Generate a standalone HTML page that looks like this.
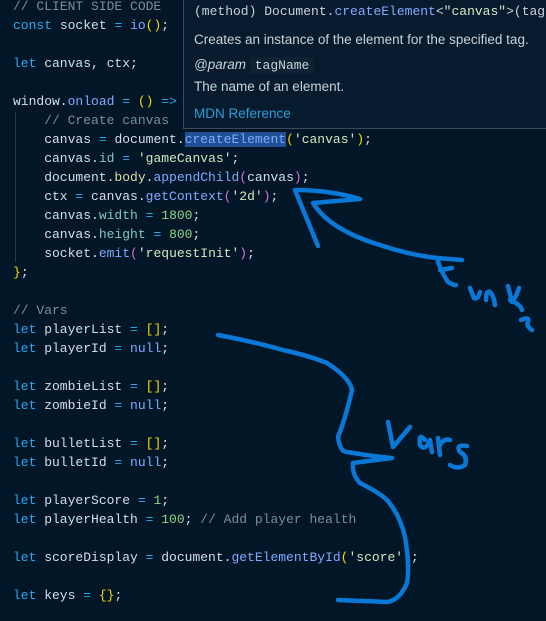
<!DOCTYPE html>
<html><head><style>
html,body{margin:0;padding:0;background:#011627;width:546px;height:621px;overflow:hidden;position:relative}
pre{margin:0;position:absolute;left:13px;top:-3px;font-family:"Liberation Mono",monospace;font-size:13px;line-height:19px;color:#d6deeb}
.k{color:#2aa7f0}.c{color:#818b96}.s{color:#d4e7c0}.n{color:#8fd48a}.p{color:#7fc8c0}.m{color:#82aaff}.y{color:#ffd700}.v{color:#da70d6}.b{color:#4aa3ff}.w{color:#e2d7a6}
.sel{background:#1f4f94}
.guide{position:absolute;left:15px;top:112px;width:1px;height:150px;background:#2a3a4a}
.tip{position:absolute;left:183px;top:-1px;width:362px;height:128px;background:#061b2e;border:1px solid #3b4a5a;border-right:none;font-family:"Liberation Sans",sans-serif;font-size:13.5px;color:#c9d1d9;overflow:hidden}
.tip .h{position:absolute;left:10px;top:4px;font-family:"Liberation Mono",monospace;font-size:13px;white-space:nowrap}
.tip .t{position:absolute;left:10px;white-space:nowrap}
code{font-family:"Liberation Mono",monospace;font-size:13px;background:#0f2233;padding:1px 5px}
</style></head><body>
<div class="guide"></div>
<pre><span class="c">// CLIENT SIDE CODE</span>
<span class="k">const</span> socket <span class="k">=</span> <span class="m">io</span><span class="y">()</span>;

<span class="k">let</span> canvas, ctx;

window.<span class="m">onload</span> <span class="k">=</span> <span class="y">()</span> <span class="k">=&gt;</span> <span class="y">{</span>
    <span class="c">// Create canvas</span>
    canvas <span class="k">=</span> document.<span class="m sel">createElement</span><span class="y">(</span><span class="s">'canvas'</span><span class="y">)</span>;
    canvas.<span class="p">id</span> <span class="k">=</span> <span class="s">'gameCanvas'</span>;
    document.<span class="w">body</span>.<span class="m">appendChild</span><span class="v">(</span>canvas<span class="v">)</span>;
    ctx <span class="k">=</span> canvas.<span class="m">getContext</span><span class="v">(</span><span class="s">'2d'</span><span class="v">)</span>;
    canvas.<span class="p">width</span> <span class="k">=</span> <span class="n">1800</span>;
    canvas.<span class="p">height</span> <span class="k">=</span> <span class="n">800</span>;
    socket.<span class="m">emit</span><span class="v">(</span><span class="s">'requestInit'</span><span class="v">)</span>;
<span class="y">}</span>;

<span class="c">// Vars</span>
<span class="k">let</span> playerList <span class="k">=</span> <span class="y">[]</span>;
<span class="k">let</span> playerId <span class="k">=</span> <span class="m">null</span>;

<span class="k">let</span> zombieList <span class="k">=</span> <span class="y">[]</span>;
<span class="k">let</span> zombieId <span class="k">=</span> <span class="m">null</span>;

<span class="k">let</span> bulletList <span class="k">=</span> <span class="y">[]</span>;
<span class="k">let</span> bulletId <span class="k">=</span> <span class="m">null</span>;

<span class="k">let</span> playerScore <span class="k">=</span> <span class="n">1</span>;
<span class="k">let</span> playerHealth <span class="k">=</span> <span class="n">100</span>; <span class="c">// Add player health</span>

<span class="k">let</span> scoreDisplay <span class="k">=</span> document.<span class="m">getElementById</span><span class="y">(</span><span class="s">'score'</span><span class="y">)</span>;

<span class="k">let</span> keys <span class="k">=</span> <span class="y">{}</span>;</pre>
<div class="tip">
<div class="h">(method) Document.<span class="m">createElement</span>&lt;<span class="s">"canvas"</span>&gt;(tagName</div>
<div class="t" style="top:32px">Creates an instance of the element for the specified tag.</div>
<div class="t" style="top:57px"><i>@param</i> <code>tagName</code></div>
<div class="t" style="top:79px">The name of an element.</div>
<div class="t" style="top:106px;color:#2a9fd6">MDN Reference</div>
</div>
<svg width="546" height="621" style="position:absolute;left:0;top:0" fill="none" stroke="#0a78d7" stroke-width="4.5" stroke-linecap="round" stroke-linejoin="round">
<path d="M318,246 L295,190 Q330,190 360,199 L313,203 Q330,230 380,245 Q410,255 437,258"/>
<path d="M462,260 L437,258 Q440,270 448,282 Q455,286 456,285 M440,270 L452,268"/>
<path d="M470,288 L474,298 Q478,300 480,292 M486,300 Q486,290 490,292 Q494,296 495,305"/>
<path d="M508,286 L512,302 L516,296 L519,288 M510,300 Q520,304 522,310 M521,320 Q530,316 528,322 Q526,326 532,330"/>
<path d="M218,335 Q255,342 283,350 Q310,356 327,363 Q350,378 352,390 Q345,420 338,437 Q340,452 347,452 Q370,456 392,458 L353,463 Q352,475 360,483 Q380,493 387,500 Q400,515 405,537 Q410,565 407,583 Q400,600 387,602 L338,600"/>
<path d="M388,422 L393,447 L410,427"/>
<path d="M425,440 Q418,432 420,445 Q425,452 430,440 L432,452"/>
<path d="M438,438 L440,455 M440,445 Q444,438 450,440"/>
<path d="M467,446 Q455,444 460,452 Q468,456 465,465 Q458,470 450,465"/>
</svg>
</body></html>
